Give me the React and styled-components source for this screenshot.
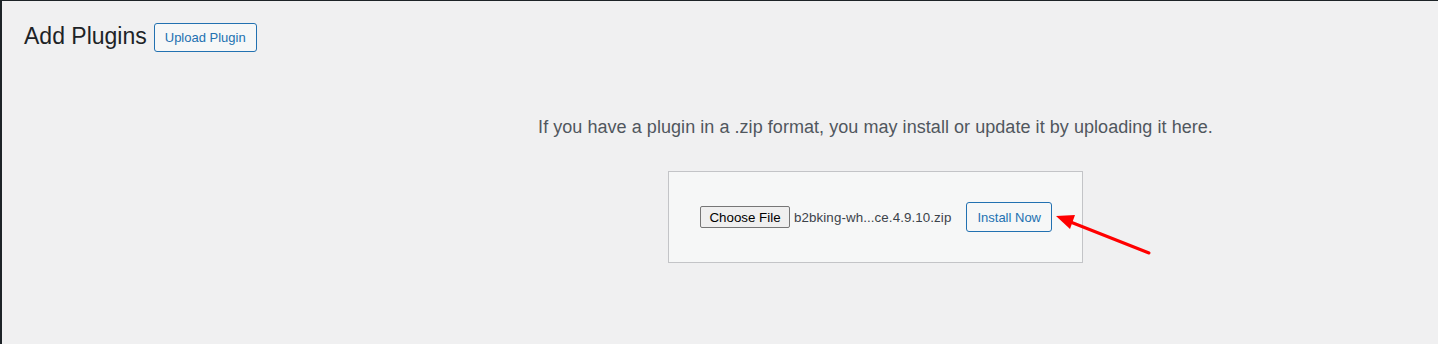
import React from 'react';
import styled, { createGlobalStyle } from 'styled-components';

const GlobalStyle = createGlobalStyle`
  html, body {
    margin: 0;
    padding: 0;
    background: #f0f0f1;
  }
  body {
    font-family: "Liberation Sans", Arial, sans-serif;
    color: #3c434a;
  }
`;

const Page = styled.div`
  position: relative;
  box-sizing: border-box;
  min-height: 100vh;
  border-top: 1px solid #1d2327;
  border-left: 2px solid #1d2327;
  background: #f0f0f1;
  overflow: hidden;
`;

const Header = styled.div`
  display: flex;
  align-items: center;
  padding: 21px 0 0 22px;
  height: 30px;
`;

const Title = styled.h1`
  margin: 0 7px 0 0;
  font-size: 23px;
  font-weight: 400;
  line-height: 1.3;
  color: #1d2327;
`;

const OutlineButton = styled.button`
  box-sizing: border-box;
  height: ${p => p.$h || 30}px;
  padding: 0 ${p => p.$px || 10}px;
  border: 1px solid #2271b1;
  border-radius: 3px;
  background: #f6f7f7;
  color: #2271b1;
  font-family: "Liberation Sans", Arial, sans-serif;
  font-size: 13px;
  cursor: pointer;
`;

const UploadSection = styled.div`
  display: flex;
  flex-direction: column;
  align-items: center;
  padding: 63px 0 0 311px;
`;

const Help = styled.p`
  margin: 0;
  font-size: 18px;
  line-height: 1.4;
  letter-spacing: 0.05px;
  color: #50575e;
  text-align: center;
`;

const UploadForm = styled.form`
  box-sizing: border-box;
  display: flex;
  align-items: center;
  width: 415px;
  margin-top: 31px;
  padding: 30px;
  border: 1px solid #c3c4c7;
  background: #f6f7f7;
`;

const FileField = styled.label`
  display: flex;
  align-items: center;
  gap: 4px;
  margin-left: 1px;
  font-family: "Liberation Sans", Arial, sans-serif;
  font-size: 13.33px;
  color: #3c434a;
`;

const ChooseButton = styled.span`
  box-sizing: border-box;
  display: inline-flex;
  align-items: center;
  justify-content: center;
  width: 90px;
  height: 22px;
  border: 1px solid #767676;
  border-radius: 2px;
  background: #efefef;
  color: #000;
  font-size: 13.33px;
`;

const FileName = styled.span`
  white-space: nowrap;
  letter-spacing: 0.1px;
`;

const Spacer = styled.div`
  flex: 1;
`;

const Arrow = styled.svg`
  position: absolute;
  left: 0;
  top: 0;
  pointer-events: none;
`;

export default function App() {
  return (
    <>
      <GlobalStyle />
      <Page>
        <Header>
          <Title>Add Plugins</Title>
          <OutlineButton $h={29} $px={10}>Upload Plugin</OutlineButton>
        </Header>
        <UploadSection>
          <Help>If you have a plugin in a .zip format, you may install or update it by uploading it here.</Help>
          <UploadForm onSubmit={e => e.preventDefault()}>
            <FileField>
              <ChooseButton>Choose File</ChooseButton>
              <FileName>b2bking-wh...ce.4.9.10.zip</FileName>
            </FileField>
            <Spacer />
            <OutlineButton type="submit" $h={30} $px={10}>Install Now</OutlineButton>
          </UploadForm>
        </UploadSection>
        <Arrow width="1438" height="344" viewBox="0 0 1438 344">
          <line x1="1147" y1="252" x2="1066" y2="220" stroke="#ff0000" strokeWidth="3" strokeLinecap="round" />
          <polygon points="1054,215 1073,214 1068,228" fill="#ff0000" />
        </Arrow>
      </Page>
    </>
  );
}
